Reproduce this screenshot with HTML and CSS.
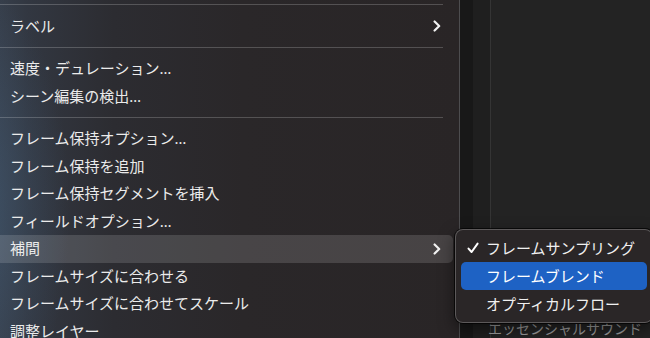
FILE: index.html
```html
<!DOCTYPE html>
<html lang="ja">
<head>
<meta charset="utf-8">
<link rel="stylesheet" href="styles.css">
</head>
<body>
<div class="screen">
  <div class="menu">
    <div class="sep first"></div>
    <div class="item"><span>ラベル</span><svg class="chev" viewBox="0 0 8 12"><path d="M1.6 1.5 L6.2 6 L1.6 10.5"/></svg></div>
    <div class="sep"></div>
    <div class="item"><span>速度・デュレーション…</span></div>
    <div class="item"><span>シーン編集の検出…</span></div>
    <div class="sep"></div>
    <div class="item"><span>フレーム保持オプション…</span></div>
    <div class="item"><span>フレーム保持を追加</span></div>
    <div class="item"><span>フレーム保持セグメントを挿入</span></div>
    <div class="item"><span>フィールドオプション…</span></div>
    <div class="item active"><span>補間</span><svg class="chev" viewBox="0 0 8 12"><path d="M1.6 1.5 L6.2 6 L1.6 10.5"/></svg></div>
    <div class="item"><span>フレームサイズに合わせる</span></div>
    <div class="item"><span>フレームサイズに合わせてスケール</span></div>
    <div class="item"><span>調整レイヤー</span></div>
  </div>
  <div class="panel">
    <div class="panel-label">エッセンシャルサウンド</div>
  </div>
  <div class="submenu">
    <div class="sub-item"><svg class="check" viewBox="0 0 12 12"><path d="M1.5 6.6 L4.6 10 L10.6 1.6"/></svg><span>フレームサンプリング</span></div>
    <div class="sub-item selected"><span class="spacer"></span><span>フレームブレンド</span></div>
    <div class="sub-item"><span class="spacer"></span><span>オプティカルフロー</span></div>
  </div>
</div>
</body>
</html>
```

FILE: styles.css
```css
html, body {
  margin: 0;
  padding: 0;
  background: #232323;
}

.screen {
  position: relative;
  width: 650px;
  height: 338px;
  overflow: hidden;
  display: flex;
  font-family: "Noto Sans", "Noto Sans CJK JP", sans-serif;
  font-size: 15px;
  color: #ebebeb;
}

.menu {
  flex: none;
  width: 480px;
  margin-left: -20px;
  height: 338px;
  box-sizing: border-box;
  border-right: 1px solid #4d4d4f;
  display: flex;
  flex-direction: column;
  background:
    radial-gradient(ellipse 90px 220px at 0% 62%, rgba(70, 100, 130, 0.45), rgba(70, 100, 130, 0) 100%),
    linear-gradient(90deg, #3a4452 0%, #323741 10%, #2c2c31 28%, #2a2729 55%, #292526 100%);
}

.sep {
  flex: none;
  height: 1px;
  margin: 6.5px 16px 7.5px 16px;
  background: rgba(255, 255, 255, 0.2);
}

.sep.first {
  margin-top: 4px;
}

.item {
  flex: none;
  height: 27.5px;
  margin: 0 6px;
  padding: 0 12px 0 24px;
  display: flex;
  align-items: center;
  justify-content: space-between;
  border-radius: 5px;
  white-space: nowrap;
  line-height: 1;
}

.item.active {
  background: rgba(255, 255, 255, 0.14);
}

.chev {
  width: 8px;
  height: 12px;
  fill: none;
  stroke: #f2f2f2;
  stroke-width: 2.2;
  stroke-linecap: round;
  stroke-linejoin: round;
}

.panel {
  flex: 1;
  background: linear-gradient(90deg, #181818 0 13px, #1f1f1f 13px 30px, #343434 30px 31px, #232323 31px);
}

.panel-label {
  padding: 321px 0 0 28px;
  font-size: 14px;
  line-height: 16px;
  color: #9c9c9c;
  white-space: nowrap;
}

.submenu {
  position: absolute;
  left: 455px;
  top: 229px;
  width: 198px;
  box-sizing: border-box;
  padding: 4px 5px;
  border: 1px solid rgba(255, 255, 255, 0.24);
  border-radius: 8px;
  background: #2a2627;
  box-shadow: 0 0 0 1px rgba(0, 0, 0, 0.7), 0 6px 16px rgba(0, 0, 0, 0.5);
  display: flex;
  flex-direction: column;
}

.sub-item {
  height: 28px;
  padding-left: 6px;
  display: flex;
  align-items: center;
  border-radius: 5px;
  white-space: nowrap;
  line-height: 1;
  color: #f0f0f0;
}

.sub-item.selected {
  background: #1e62c4;
  color: #ffffff;
}

.check,
.spacer {
  flex: none;
  width: 12px;
  height: 12px;
  margin-right: 7px;
}

.check {
  fill: none;
  stroke: #ffffff;
  stroke-width: 2;
  stroke-linecap: round;
  stroke-linejoin: round;
}
```
